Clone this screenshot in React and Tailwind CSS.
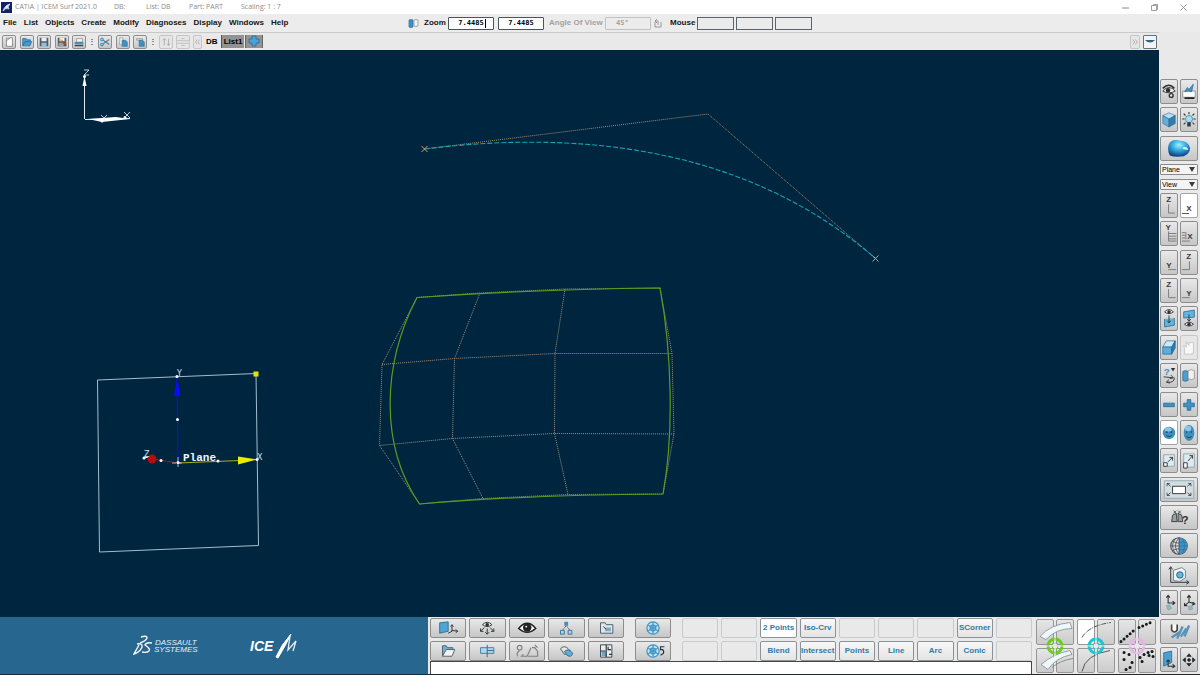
import { useState } from 'react';
import clsx from 'clsx';

const MENUS = ['File', 'List', 'Objects', 'Create', 'Modify', 'Diagnoses', 'Display', 'Windows', 'Help'];

const INK = '#2b2f33';
const BLUE = '#3f93c4';
const DEEP = '#1f5f8b';

/* ---------- toolbar icons, 14 x 14 ---------- */
const fileIcons = [
  ['New', <path d="M4 2.500h4l-4 3zM4 5v7h7V2H8" fill="#fff" stroke="#777" strokeWidth=".9" />],
  ['Open', <g><path d="M2 11V3h4l1 1.500h4V6" fill="#4aa0d0" stroke={DEEP} strokeWidth=".8" /><path d="M2 11.500l2.500-5h8l-2 5z" fill="#3f9bd0" stroke={DEEP} strokeWidth=".7" /></g>],
  ['Save', <g><path d="M2 2h10v10H2z" fill="#4f5e69" /><path d="M4 2h6v4H4z" fill="#eee" /><path d="M4 8h6v4H4z" fill="#8fc1dd" /></g>],
  ['Save as', <g><path d="M2 2h10v10H2z" fill="#4f5e69" /><path d="M4 2h6v4H4z" fill="#eee" /><path d="M3 8h6v4H3z" fill="#9a9fa3" /><path d="M6 5l6 6" stroke="#b3471f" strokeWidth="1.600" /><path d="M5 4l2 2" stroke="#e3b23c" strokeWidth="1.600" /></g>],
  ['Print', <g><path d="M4 3h7v4H4z" fill="#f5f5f5" stroke="#777" strokeWidth=".7" /><path d="M2 7h10v3H2z" fill="#4a8db5" /><path d="M2 10.500h10v1.500H2z" fill="#444" /></g>],
];
const editIcons = [
  ['Cut', <g fill="none" stroke={BLUE} strokeWidth="1.300"><path d="M5 5l7 5M5 9l7-5" stroke="#587c93" /><circle cx="3.500" cy="4" r="1.500" /><circle cx="3.500" cy="10" r="1.500" /></g>],
  ['Copy', <g><path d="M3 2h4v8H3z" fill="#e9e9e9" stroke="#999" strokeWidth=".7" /><path d="M6 5h4l2 2v5H6z" fill={BLUE} stroke={DEEP} strokeWidth=".6" /></g>],
  ['Paste', <g><path d="M3 3h7v2H3z" fill="#ddd" stroke="#888" strokeWidth=".7" /><path d="M6 5h4l2 2v5H6z" fill={BLUE} stroke={DEEP} strokeWidth=".6" /></g>],
];

/* ---------- side palette icons: narrow keys are 18 x 25, wide keys 38 x 25 ---------- */
const axis = (children) => (
  <g fill="none" stroke="#777" strokeWidth="1">
    {children}
  </g>
);
const letter = (x, y, t) => (
  <text x={x} y={y} className="font-['Liberation_Sans'] text-[9px] font-bold" fill="#3a3a3a">{t}</text>
);
const tinyEye = (x, y) => (
  <g transform={`translate(${x} ${y})`}>
    <path d="M-5 0Q0-5 5 0Q0 4-5 0z" fill="#f3f3f3" stroke={INK} strokeWidth="1" />
    <circle r="1.900" fill={INK} />
  </g>
);
const cube = <g stroke="#246189" strokeWidth=".6"><path d="M2 8l7-3 7 3-7 4z" fill="#b5dff4" /><path d="M2 8l7 4v9l-7-4z" fill="#62aed7" /><path d="M16 8l-7 4v9l7-4z" fill="#2f7fae" /></g>;

const palette = [
  { keys: [
    ['Visibility settings', <g><path d="M2 12Q9 4 16 12Q9 16 2 12z" fill="#f3f3f3" stroke={INK} /><path d="M2 9Q9 2 15 9" fill="none" stroke={INK} strokeWidth="1.800" /><circle cx="8" cy="11" r="2.500" fill={INK} /><circle cx="11.500" cy="17" r="2.200" fill="#ddd" stroke={INK} strokeWidth="1.500" /></g>],
    ['Screen', <g><path d="M2 12h14v7H2z" fill="#fff" stroke="#777" strokeWidth=".8" /><path d="M4 19h11v2H4z" fill="#222" /><path d="M4 13l3-5 2 2 5-6-2 9-4-1z" fill={BLUE} stroke={DEEP} strokeWidth=".6" /></g>],
  ] },
  { keys: [
    ['Shaded box', cube],
    ['Light', <g><circle cx="9" cy="12" r="4" fill="#a8dcf2" stroke="#3b83a8" strokeWidth=".9" /><path d="M7 15.500h4v5H7z" fill="#343c41" /><path d="M1.500 12h2.500M14 12h2.500M3 6l2 2M15 6l-2 2M9 4v2.500M3 18l2-2M15 18l-2-2" stroke="#333" strokeWidth="1.200" /></g>],
  ] },
  { wide: true, keys: [
    ['Surface shading', <g><defs><radialGradient id="blob" cx=".5" cy=".3" r=".7"><stop offset="0" stopColor="#a5f0ff" /><stop offset=".45" stopColor="#35aede" /><stop offset="1" stopColor="#0b3f80" /></radialGradient></defs><path d="M9 6Q13 2 20 4Q29 4 31 12Q31 18 24 21Q14 22 9 20Q5 12 9 6z" fill="url(#blob)" /><path d="M24 11q4-1 5 3l-6-1z" fill="#d6f7ff" /></g>],
  ] },
  { select: 'Plane', options: ['Plane', 'Axis'] },
  { select: 'View', options: ['View', 'World'] },
  { on: 1, keys: [
    ['View ZX left', <g>{letter(6, 9, 'Z')}{axis(<path d="M8.500 11v10h7" />)}</g>],
    ['View X', <g>{letter(6, 19, 'X')}{axis(<path d="M1 21.500h8" stroke="#444" />)}</g>],
  ] },
  { keys: [
    ['View Y grid', <g>{letter(5, 9, 'Y')}{axis(<path d="M8.500 10v11h9M8.500 12.500h9M8.500 15.500h9M8.500 18.500h9" />)}</g>],
    ['View X grid', <g>{letter(7, 19, 'X')}{axis(<path d="M1 11.500h4M1 14.500h4M1 17.500h4M5.500 11v8M1 21h9" />)}</g>],
  ] },
  { keys: [
    ['View Y', <g>{letter(6, 19, 'Y')}{axis(<path d="M8 20.500h9" />)}</g>],
    ['View Z', <g>{letter(6, 9, 'Z')}{axis(<path d="M9.500 11v9.500H1" />)}</g>],
  ] },
  { keys: [
    ['View Z front', <g>{letter(6, 9, 'Z')}{axis(<path d="M8.500 11v9.500h8" />)}</g>],
    ['View Y back', <g>{letter(6, 19, 'Y')}{axis(<path d="M1 20.500h9" />)}</g>],
  ] },
  { keys: [
    ['Show to plane', <g>{tinyEye(9, 5)}<path d="M4 13v9l11-2v-8" fill="#62b4dc" stroke={DEEP} strokeWidth=".8" /><path d="M9 9v8M7 15l2 2.500 2-2.500" fill="none" stroke={INK} /></g>],
    ['Plane to view', <g><path d="M3 5l12-2v8l-12 1z" fill="#62b4dc" stroke={DEEP} strokeWidth=".8" />{tinyEye(9, 19)}<path d="M9 8v7M7 13l2 2.500 2-2.500" fill="none" stroke={INK} /></g>],
  ] },
  { off: 1, keys: [
    ['Eraser', <g stroke={DEEP} strokeWidth=".7"><path d="M2 12l4-7h10l-4 7z" fill="#c8e9f8" /><path d="M2 12h10v8H2z" fill="#5aaeda" /><path d="M12 12l4-7v8l-4 7z" fill="#2c7cae" /></g>],
    ['Hand', <path d="M4 20v-6l-1-4 3 2V6l3 4V7h5v12l-3 1z" fill="#f8f8f8" stroke="#bbb" strokeWidth=".8" />],
  ] },
  { keys: [
    ['Query', <g><text x="3" y="12" className="font-['Liberation_Sans'] text-[11px] font-bold" fill={BLUE}>?</text><path d="M11 4h5l-2.500 4z" fill="#333" /><path d="M3 14l10 1M11 12l3 3-4 1M15 15q0 6-8 5M9 17l-3 3 4 1" fill="none" stroke={INK} /></g>],
    ['Compare bodies', <g><path d="M2 8q3-2 6 0v10q-3 2-6 0z" fill="#4c9fcf" stroke={DEEP} strokeWidth=".7" /><path d="M8 7q4-2 7 0v9q-3 2-7 0z" fill="#f2f2f2" stroke="#888" strokeWidth=".8" /></g>],
  ] },
  { keys: [
    ['Remove', <path d="M3 11h12v4H3z" fill={BLUE} stroke={DEEP} strokeWidth=".8" />],
    ['Add', <path d="M7 7h4v4h4v4h-4v4H7v-4H3v-4h4z" fill={BLUE} stroke={DEEP} strokeWidth=".8" />],
  ] },
  { on: 0, keys: [
    ['Sphere', <g><circle cx="9" cy="13" r="7" fill="#3f8fbe" /><ellipse cx="8" cy="9" rx="4" ry="2.500" fill="#8cc6e4" /><circle cx="6.500" cy="12" r="1" fill="#173f5c" /><circle cx="11.500" cy="12" r="1" fill="#173f5c" /><path d="M6 16q3 2 6 0" stroke="#173f5c" fill="none" /></g>],
    ['Ellipsoid', <g><ellipse cx="9" cy="13" rx="6" ry="9" fill="#3f8fbe" /><ellipse cx="8" cy="8" rx="3.500" ry="3" fill="#8cc6e4" /><circle cx="6.500" cy="12" r=".9" fill="#173f5c" /><circle cx="11.500" cy="12" r=".9" fill="#173f5c" /><path d="M6 17q3 3 6 0" stroke="#173f5c" fill="none" /></g>],
  ] },
  { keys: [
    ['Zoom out', <g><path d="M3 6h12v13H3z" fill="#ddeaf0" stroke="#8fa3ad" /><path d="M3 15h4v4H3z" fill="#fff" stroke={INK} /><path d="M8 14l5-5M9.500 9H13v3.500" fill="none" stroke={INK} /></g>],
    ['Zoom in', <g><path d="M3 5h12v15H3z" fill="#ddeaf0" stroke="#8fa3ad" /><path d="M3 15h4v6H3z" fill="#fff" stroke={INK} /><path d="M8 13l5-6M9.500 7H13v3.500" fill="none" stroke={INK} /></g>],
  ] },
  { wide: true, keys: [
    ['Fit view', <g><path d="M3 3h32v19H3z" fill="#d3dde1" stroke="#8fa9b4" /><path d="M12 9h14v8H12z" fill="#fff" stroke={INK} /><path d="M6 6l4 3M32 6l-4 3M6 19l4-3M32 19l-4-3M6 9V6h3M32 9V6h-3M6 16v3h3M32 16v3h-3" fill="none" stroke={INK} strokeWidth=".8" /></g>],
  ] },
  { wide: true, keys: [
    ['Search', <g><path d="M12 10l4-2 1 9h-6zM18 8l4 2 1 7h-5z" fill="#9aa0a4" stroke={INK} strokeWidth=".9" /><path d="M13 5l3 3M16 5l-3 3M18 5l3 3M21 5l-3 3" stroke={INK} strokeWidth=".8" /><text x="22" y="20" className="font-['Liberation_Sans'] text-[12px] font-bold" fill={INK}>?</text></g>],
  ] },
  { wide: true, keys: [
    ['Diagnosis', <g><circle cx="19" cy="13" r="9" fill="#ddd" stroke="#454f57" strokeWidth="1.200" /><path d="M19 4a9 9 0 0 1 0 18z" fill="#3f93c4" /><path d="M19 4v18M10 13h9M12 8q4 2 7 2M12 18q4-2 7-2M19 4q-8 9 0 18M15 5q-6 8 0 16" fill="none" stroke="#3b464e" strokeWidth=".8" /><path d="M19 9h8M19 13h9M19 17h8M23 5q4 8 0 16" fill="none" stroke="#2a6f9b" strokeWidth=".7" /></g>],
  ] },
  { wide: true, keys: [
    ['Model scope', <g><path d="M10 21V5M8 7l2-3 2 3M10 21h19M27 19l3 2-3 2" fill="none" stroke={INK} /><path d="M13 8l9-3 4 3v8l-6 4-7-1z" fill="#eef3f5" stroke="#6d7d86" /><circle cx="20" cy="13" r="3.500" fill="#6ab6dc" stroke={DEEP} /></g>],
  ] },
  { keys: [
    ['Local axes', <g><path d="M8 5v8h7M6 7l2-2.500 2 2.500M13 11l2.500 2-2.500 2" fill="none" stroke={INK} strokeWidth="1.200" /><path d="M6 16l4-1 2 4-4 2z" fill="#8fb9cc" stroke="#7795a3" strokeWidth=".6" /></g>],
    ['World axes', <g><path d="M9 5v7l-5 4M9 12l6 2M7 7l2-2.500 2 2.500M13 12l2.500 2-3 1.500M4 13v3h3" fill="none" stroke={INK} strokeWidth="1.200" /><path d="M8 17l4-1 1 4-4 1z" fill="#8fb9cc" stroke="#7795a3" strokeWidth=".6" /></g>],
  ] },
  { wide: true, keys: [
    ['Tools', <g><path d="M11 5v6q3 4 6 0V5" fill="#fff" stroke="#444" strokeWidth="1.800" /><path d="M11 19l9-6M17 20l6-13M21 18l6-9M25 18l5-12" stroke="#5794b6" strokeWidth="2.500" /></g>],
  ] },
  { keys: [
    ['Place plane', <g><path d="M3 5l9-2v13l-9 4z" fill="#4c9fcf" stroke={DEEP} strokeWidth=".8" /><path d="M8 13v7h7M6 15l2-2 2 2M13 18l2.500 2-2.500 2" fill="none" stroke={INK} strokeWidth="1.200" /></g>],
    ['Move', <path d="M9 6l2.500 3h-5zM9 20l2.500-3h-5zM2 13l3-2.500v5zM16 13l-3-2.500v5zM9 11l2 2-2 2-2-2z" fill="#26292c" stroke="#26292c" strokeWidth=".8" />],
  ] },
];

/* ---------- lower command keys, 36 x 19 ---------- */
const snow = (cx) => (
  <g fill="none" stroke={BLUE} strokeWidth="1.300">
    <circle cx={cx} cy="9.500" r="6.500" fill="#c9e3f0" />
    <path d={`M${cx} 3.500v12M${cx - 5} 6.500l10 6M${cx + 5} 6.500l-10 6`} />
    <circle cx={cx} cy="9.500" r="3" />
  </g>
);
const commandIcons = [
  ['Plane and axes', <g><path d="M9 4l9-1v10l-9 2z" fill="#4fa6d6" stroke={DEEP} strokeWidth=".8" /><path d="M22 7v6l-4 2M22 12l6 1M20.500 8L22 6l1.500 2M26 11l2 2-2 1.500" fill="none" stroke={INK} /></g>],
  ['View directions', <g>{tinyEye(18, 6)}<path d="M18 10v6M15 9l-4 4M21 9l4 4M16 14l2 2 2-2M11 10v3h3M25 10v3h-3" fill="none" stroke={INK} /></g>],
  ['Show', <g><path d="M9 10Q18-1 27 10Q18 18 9 10z" fill="#fff" stroke="#222" strokeWidth="1.600" /><circle cx="18" cy="9" r="4.500" fill="#1f2326" /><circle cx="17" cy="8" r="1" fill="#fff" /></g>],
  ['Hierarchy', <g><path d="M18 7l-4 5M18 7l4 5" stroke="#444" strokeDasharray="1.500 1" /><path d="M16 3h4v4h-4z" fill={BLUE} /><path d="M12 12h4v4h-4zM20 12h4v4h-4z" fill="#a8d4ea" stroke={DEEP} strokeWidth=".8" /></g>],
  ['Folder link', <g><path d="M12 15V4h5l1 2h7v9z" fill="#dfe5e8" stroke="#4f5c64" /><path d="M17 9h6v4h-6z" fill="#7badc6" /><path d="M15 8l3 3" stroke={INK} /></g>],
  ['Open folder', <g><path d="M12 15V4h4l1 2h6v2" fill="#70afd0" stroke="#50616b" /><path d="M12 15l4-7h9l-3 7z" fill="#f3f3f3" stroke="#50616b" /></g>],
  ['Section', <g><path d="M11 6h14v6H11z" fill="#b6d5e5" stroke="#3f7fa5" /><path d="M18 3v13M18 9h7" stroke="#2d6d96" /></g>],
  ['Shape tools', <g fill="none" stroke="#808080" strokeWidth="1.200"><circle cx="10" cy="6" r="2.500" /><path d="M10 9q-4 3-2 6M14 13l-2 2h6l4-9M19 15h10v-5l-3-4h-3M26 3l3 3" /></g>],
  ['Bodies', <g stroke={DEEP} strokeWidth=".9"><path d="M12 7q4-4 8 0l2 2q-2 5-6 4z" fill="#e5e9eb" stroke="#444" /><path d="M16 10q4-4 9 2-2 5-6 2z" fill="#62afd6" /></g>],
  ['Windows layout', <g><path d="M12 3h12v13H12z" fill="#e9eef0" stroke="#3c464c" /><path d="M13 10h5v5h-5z" fill="#69a9c9" /><path d="M18 3v13M12 9.500h5M20 5v3h3M21 13h3" stroke={INK} fill="none" strokeWidth="1.200" /></g>],
];
const snowIcons = [
  ['Freeze', snow(18)],
  ['Freeze five', <g>{snow(18)}<path d="M30 5h-4v3h2q2 1 1 4l-3 2" fill="none" stroke={INK} strokeWidth="1.200" /></g>],
];
const CURVES = ['', '', '2 Points', 'Iso-Crv', '', '', '', 'SCorner', '', '', '', 'Blend', 'Intersect', 'Points', 'Line', 'Arc', 'Conic', ''];

/* Groups of four keys joined by one ring, drawn on a 38 x 53 field */
const clusters = [
  { name: 'Surfaces', ring: '#6ccb1f', art: <g><path d="M4 17Q14 5 34 3l2 6Q20 9 10 20z" fill="#f0f7fb" stroke="#7d8b93" strokeWidth=".8" /><path d="M5 45Q18 34 34 31l2 4Q20 38 12 50z" fill="#f0f7fb" stroke="#7d8b93" strokeWidth=".8" /><path d="M16 48Q24 41 37 39" fill="none" stroke="#777" strokeWidth=".8" /></g> },
  { name: 'Curves', ring: '#18c6d0', on: true, art: <g fill="none" stroke="#555"><path d="M5 18Q12 6 34 3" strokeDasharray="5 1 1 1" /><path d="M5 52Q8 35 33 31" /></g> },
  { name: 'Points', ring: '#e3b4e4', art: <g fill="none" stroke="#17191b" strokeWidth="3" strokeLinecap="round"><path d="M3 22L17 10M21 8L35 2" strokeDasharray="0 4" /><path d="M6 33h.1M11 35h.1M6 40h.1M14 43h.1M8 50h.1M12 48h.1M22 38h.1M26 35h.1M30 33h.1M34 32h.1M35 37h.1M24 42h.1M31 36h.1" /></g> },
];

function Key({ label, box, children, className, on, off }) {
  return (
    <button
      type="button"
      aria-label={label}
      className={clsx(
        'block min-w-0 overflow-hidden rounded-[2px] border',
        on ? 'border-[#a4a4a4] bg-white' : off ? 'border-[#c6c6c6] bg-[#e6e6e6]' : 'border-[#8d8d8d] bg-linear-to-b from-[#e9e9e9] to-[#c6c6c6]',
        className
      )}
    >
      <svg viewBox={box} className="h-full w-full">{children}</svg>
    </button>
  );
}

function TopBar() {
  return (
    <header className="flex h-[14px] shrink-0 items-center bg-white pl-px pr-[12px] font-['Open_Sans',sans-serif] text-[7px] leading-[14px] whitespace-pre text-[#8c8c8c]">
      <svg viewBox="0 0 11 11" className="mr-[3px] h-[11px] w-[11px]">
        <path d="M0 0h11v11H0z" fill="#10206b" />
        <path d="M2 9Q4 3 9 2 6 5 8 7 5 5 2 9" fill="#dfe8ff" stroke="#fff" strokeWidth=".6" />
      </svg>
      <h1 className="w-[99px]">CATIA | ICEM Surf 2021.0</h1>
      <span className="w-[32px]">DB:</span>
      <span className="w-[43px]">List: DB</span>
      <span className="w-[52px]">Part: PART</span>
      <span>Scaling: 1 : 7</span>
      <div className="ml-auto flex gap-[20px] text-[#888]">
        <button type="button" aria-label="Minimize">
          <svg viewBox="0 0 9 9" className="h-[9px] w-[9px]"><path d="M1 5h7" stroke="currentColor" /></svg>
        </button>
        <button type="button" aria-label="Restore">
          <svg viewBox="0 0 9 9" className="h-[9px] w-[9px]"><path d="M1.500 2.500h5v5h-5zM3.500 2.500v-1h4v5h-1" fill="none" stroke="currentColor" strokeWidth=".8" /></svg>
        </button>
        <button type="button" aria-label="Close">
          <svg viewBox="0 0 9 9" className="h-[9px] w-[9px]"><path d="M1.500 1.500l6 6M7.500 1.500l-6 6" stroke="currentColor" strokeWidth=".8" /></svg>
        </button>
      </div>
    </header>
  );
}

function MenuBar() {
  const [zoom, setZoom] = useState(['7.4485', '7.4485']);
  const setAt = (i) => (e) => setZoom(zoom.map((z, k) => (k === i ? e.target.value : z)));
  const field = "h-[13px] w-[46px] rounded-[1px] border border-[#4b545b] bg-white px-[8px] text-center font-['DejaVu_Sans_Mono',monospace] text-[7px] font-bold text-black outline-none";

  return (
    <div className="flex h-[18px] shrink-0 items-center bg-[#ececec] text-[8px] font-bold text-[#161616]">
      <nav className="flex w-[34%] gap-[7px] pl-[3px]">
        {MENUS.map((m) => <button key={m} type="button">{m}</button>)}
      </nav>
      <svg viewBox="0 0 11 10" className="mr-[5px] h-[10px] w-[11px]">
        <path d="M1 2q2-1 4 0v7q-2 1-4 0z" fill={BLUE} stroke={DEEP} strokeWidth=".6" />
        <path d="M6 2q2-1 4 0v6q-2 1-4 0z" fill="#f2f2f2" stroke="#888" strokeWidth=".7" />
      </svg>
      <label htmlFor="zoomX" className="w-[24px]">Zoom</label>
      <div className="relative mr-[4px]">
        <input id="zoomX" value={zoom[0]} onChange={setAt(0)} className={field} />
        <span className="absolute top-[2px] right-[8px] h-[9px] w-px bg-black" />
      </div>
      <input aria-label="Zoom Y" value={zoom[1]} onChange={setAt(1)} className={field} />
      <label htmlFor="angle" className="w-[61px] pl-[5px] whitespace-nowrap text-[#a2a2a2]">Angle Of View</label>
      <input id="angle" disabled defaultValue="45°" className="h-[13px] w-[46px] rounded-[1px] border border-[#c2c2c2] bg-[#ececec] pl-[10px] font-['DejaVu_Sans_Mono',monospace] text-[7px] text-[#a2a2a2]" />
      <svg viewBox="0 0 9 10" className="ml-[3px] h-[10px] w-[9px]">
        <path d="M1 4v5h6V4M3 1L1 3l2 2M1 3h3v4" fill="none" stroke="#8f8f8f" strokeWidth=".9" />
      </svg>
      <span className="w-[34px] pl-[7px]">Mouse</span>
      <div className="flex gap-[2px]">
        {['left', 'middle', 'right'].map((b) => (
          <input key={b} aria-label={`Mouse ${b}`} readOnly className="h-[13px] w-[37px] border border-[#5b6369] bg-[#ebebeb]" />
        ))}
      </div>
    </div>
  );
}

function Grip() {
  return (
    <svg viewBox="0 0 4 8" className="h-[8px] w-[4px]">
      <path d="M1 1h2v1H1zM1 3h2v1H1zM1 6h2v1H1z" fill="#8b8b8b" />
    </svg>
  );
}

function ToolBar() {
  const key = 'h-[14px] w-[14px]';
  return (
    <div className="flex h-[18px] shrink-0 items-center border-t border-[#c9c9c9] bg-[#e9e9e9] pr-[2px] pl-[2px] text-[8px] font-bold text-black">
      <div className="flex w-[84px] justify-between">
        {fileIcons.map(([n, art]) => <Key key={n} label={n} box="0 0 14 14" className={key}>{art}</Key>)}
      </div>
      <div className="flex w-[12px] justify-center"><Grip /></div>
      <div className="flex w-[49px] justify-between">
        {editIcons.map(([n, art]) => <Key key={n} label={n} box="0 0 14 14" className={key}>{art}</Key>)}
      </div>
      <div className="flex w-[12px] justify-center"><Grip /></div>
      <div className="flex gap-[3px]">
        <Key off label="Sort" box="0 0 14 14" className={key}><path d="M5 11V3M3 5l2-2 2 2M10 3v8M8 9l2 2 2-2" fill="none" stroke="#aaa" /></Key>
        <Key off label="Split" box="0 0 14 14" className={key}><path d="M0 5.500h14M0 8.500h14M5 3h4M5 11h4" stroke="#bbb" /></Key>
        <Key off label="Back" box="0 0 9 14" className="h-[14px] w-[9px]"><path d="M4 4L2 7l2 3M7 4L5 7l2 3" fill="none" stroke="#aaa" /></Key>
      </div>
      <span className="w-[19px] pl-[4px]">DB</span>
      <div className="flex gap-px">
        <button type="button" className="h-[13px] w-[23px] border-l border-[#555] bg-[#929292]">List1</button>
        <button type="button" aria-label="Add list" className="flex h-[13px] w-[18px] justify-center border-r border-l border-[#666] bg-[#929292]">
          <svg viewBox="0 0 12 12" className="h-[12px] w-[12px]"><path d="M4 1h4v3h3v4H8v3H4V8H1V4h3z" fill="#4ba2d4" stroke="#276b97" strokeWidth=".8" /></svg>
        </button>
      </div>
      <div className="ml-auto flex gap-[3px]">
        <Key off label="More" box="0 0 9 14" className="h-[14px] w-[10px]"><path d="M2 4l2 3-2 3M5 4l2 3-2 3" fill="none" stroke="#aaa" /></Key>
        <button type="button" aria-label="Collapse" className="h-[14px] w-[14px] rounded-[1px] border border-[#66717a] bg-[#f3f3f3]">
          <svg viewBox="0 0 12 12" className="h-full w-full"><path d="M1 4h10Q6 9 1 4" fill="#2d6488" /></svg>
        </button>
      </div>
    </div>
  );
}

function Scene() {
  const dot = (x, y) => <circle key={`${x}-${y}`} cx={x} cy={y} r="1.500" />;
  return (
    <main className="min-h-0 flex-1 bg-[#00263f]">
      <svg viewBox="0 50 1159 567" className="h-full w-full">
        {/* view compass */}
        <g stroke="#dfe9ef" fill="#fff">
          <path d="M84.500 77v42M85 119.500l45-1" />
          <path d="M84.500 76l2 10h-4z" stroke="none" />
          <path d="M88 119l14 3 28-3-14-2z" stroke="none" />
        </g>
        <g fill="#fff">{[[84.5, 76.500], [102, 121], [125, 117.500]].map(([x, y]) => dot(x, y))}</g>
        <g fill="none" stroke="#d7e1e8" strokeWidth=".9">
          <path d="M84 70h5l-5 5h5M101 115l3 3 3-3M104 118v3M124 112l6 6M130 112l-6 6" />
        </g>

        {/* curve with its control polygon */}
        <path d="M424.500 149L708 114L875.500 258.500" fill="none" stroke="#a98a68" strokeDasharray="1 1" />
        <path d="M424.500 149Q708 114 875.500 258.500" fill="none" stroke="#16a3b5" strokeWidth="1.100" strokeDasharray="5 2" />
        <path d="M421.500 146l6 6M427.500 146l-6 6M872.500 255.500l6 6M878.500 255.500l-6 6" stroke="#d79d55" />

        {/* surface control mesh */}
        <g fill="none" stroke="#a18d78" strokeDasharray="1 1">
          <path d="M417 297.500L480 293L565 289L660 288" />
          <path d="M382 364.500L454.500 358.500L555 353.500L672 353.500" />
          <path d="M379.500 445.500L452.500 438.500L554.500 433.500L674 434" />
          <path d="M419.500 504L483 498.500L568 494.500L663 494" />
          <path d="M417 297.500L382 364.500L379.500 445.500L419.500 504" />
          <path d="M480 293L454.500 358.500L452.500 438.500L483 498.500" />
          <path d="M565 289L555 353.500L554.500 433.500L568 494.500" />
          <path d="M660 288L672 353.500L674 434L663 494" />
        </g>
        <path
          d="M417 297.500C480 293 565 289 660 288C672 353.500 674 434 663 494C568 494.500 483 498.500 419.500 504C379.500 445.500 382 364.500 417 297.500z"
          fill="none" stroke="#5c9c1c" strokeWidth="1.200"
        />

        {/* reference plane */}
        <path d="M97.500 380L256 373.500L258.500 545.500L99.500 552z" fill="none" stroke="#a3bdca" />
        <path d="M253.500 371.500h5v5h-5z" fill="#e4e400" />
        <path d="M178 463L177 378" stroke="#1212c8" strokeWidth="1.200" />
        <path d="M177 378l4 18h-7z" fill="#0b0bf0" />
        <path d="M178 463L240 460.500" stroke="#a9ae12" strokeWidth="1.200" />
        <path d="M238 456.500L257 459.500L238 464.500z" fill="#ecec00" />
        <path d="M178 463L152 459" stroke="#a02020" strokeDasharray="5 1" />
        <path d="M144 458l5-1" stroke="#fff" />
        <circle cx="152" cy="459" r="4.500" fill="#b40d0d" />
        <path d="M178 457v11M172 463h12" stroke="#cfd9df" strokeWidth=".8" strokeDasharray="4 2" />
        <g fill="#fff">
          {[[177, 376.500], [177.500, 419.500], [178, 462.500], [161, 460.500], [144, 458], [218, 461], [257, 459.500]].map(([x, y]) => dot(x, y))}
        </g>
        <g fill="#d7e1e8" className="font-['DejaVu_Sans'] text-[8px]">
          <text x="177" y="376">Y</text>
          <text x="144" y="457">Z</text>
          <text x="257" y="460">X</text>
        </g>
        <text x="183" y="461" fill="#f1f5f7" className="font-['Liberation_Mono'] text-[11px] font-bold">Plane</text>
      </svg>
    </main>
  );
}

function Brand() {
  return (
    <div className="flex w-[428px] shrink-0 items-center bg-[#27668f] pl-[133px]">
      <svg viewBox="0 0 70 24" className="h-[24px] w-[70px]">
        <g fill="none" stroke="#f2f7fa" strokeWidth="1.400">
          <path d="M8 3Q14 1 14 4Q13 7 7 9" />
          <path d="M4 10Q10 9 9 13Q7 18 1 20L6 11" />
          <path d="M19 9Q13 8 12 11Q18 15 16 17Q14 19 9 18" />
        </g>
        <g fill="#e6eff4" className="font-['Liberation_Sans'] text-[8px] italic">
          <text x="22" y="11">DASSAULT</text>
          <text x="21" y="18">SYSTEMES</text>
        </g>
      </svg>
      <svg viewBox="0 0 54 26" className="ml-[46px] h-[26px] w-[54px]">
        <text x="1" y="18" fill="#fff" className="font-['Liberation_Sans'] text-[14px] font-bold italic">ICE</text>
        <path d="M27 24Q32 12 42 1Q37 12 29 25z" fill="#fff" stroke="#fff" />
        <path d="M41 3L39 17L47 8L44 18" fill="none" stroke="#e6eff4" strokeWidth="1.300" />
      </svg>
    </div>
  );
}

function CommandPanel() {
  const key = 'h-[20px] w-full';
  return (
    <div className="flex flex-1 flex-col pt-px pl-[2px]">
      <div className="flex flex-1 items-start gap-[11px]">
        <div className="grid w-[194px] grid-cols-5 gap-[3px]">
          {commandIcons.map(([n, art]) => <Key key={n} label={n} box="0 0 36 19" className={key}>{art}</Key>)}
        </div>
        <div className="grid w-[36px] gap-[3px]">
          {snowIcons.map(([n, art]) => <Key key={n} label={n} box="0 0 36 19" className={key}>{art}</Key>)}
        </div>
        <div className="grid flex-1 grid-cols-9 gap-[3px]">
          {CURVES.map((c, i) => (
            <button
              key={i}
              type="button"
              disabled={!c}
              className={clsx(
                'flex h-[20px] min-w-0 items-center justify-center overflow-hidden rounded-[2px] border text-[8px] font-bold whitespace-nowrap text-[#2f7ba6]',
                !c && 'border-[#cacaca] bg-[#e9e9e9]',
                c && (c === '2 Points' ? 'border-[#8b9298] bg-white' : 'border-[#8b9298] bg-linear-to-b from-[#f8f8f8] to-[#e4e4e4]')
              )}
            >
              {c}
            </button>
          ))}
        </div>
      </div>
      <input aria-label="Command line" className="h-[13px] w-full border border-b-0 border-[#454545] bg-white px-[2px] text-[8px] outline-none" />
    </div>
  );
}

function Clusters() {
  return (
    <div className="flex gap-[3px] pt-[2px] pr-[3px] pl-[4px]">
      {clusters.map((c) => (
        <div key={c.name} className="relative grid h-[54px] w-[38px] grid-cols-2 gap-x-[2px] gap-y-[3px]">
          {[0, 1, 2, 3].map((i) => (
            <button
              key={i}
              type="button"
              aria-label={`${c.name} ${i + 1}`}
              className={clsx('rounded-[2px] border border-[#969696]', c.on && i === 0 ? 'bg-white' : 'bg-linear-to-b from-[#e6e6e6] to-[#cbcbcb]')}
            />
          ))}
          <svg viewBox="0 0 38 53" className="pointer-events-none absolute inset-0 h-full w-full">
            {c.art}
            <circle cx="19" cy="26.500" r="7" fill="none" stroke={c.ring} strokeWidth="3" />
            <circle cx="19" cy="26.500" r="3" fill="none" stroke={c.ring} strokeWidth="1" />
            <path d="M18.500 17h1v20h-1zM10 26h18v1H10z" fill="#e9e9e9" />
          </svg>
        </div>
      ))}
    </div>
  );
}

function SidePalette() {
  return (
    <aside className="flex w-[41px] shrink-0 flex-col justify-between bg-[#e9e9e9] pt-[47px] pr-[2px] pb-[2px] pl-px">
      {palette.map((row, r) => row.select ? (
        <div key={r} className="relative">
          <select aria-label={row.select} defaultValue={row.select} className="block h-[11px] w-full appearance-none rounded-[1px] border border-[#8a8a8a] bg-[#f4f4f4] pl-px text-[7px] leading-[9px] text-black">
            {row.options.map((o) => <option key={o}>{o}</option>)}
          </select>
          <svg viewBox="0 0 6 5" className="pointer-events-none absolute top-[3px] right-[3px] h-[5px] w-[6px]"><path d="M0 0h6L3 5z" fill="#3b3b3b" /></svg>
        </div>
      ) : (
        <div key={r} className={clsx('grid gap-[2px]', row.wide ? 'grid-cols-1' : 'grid-cols-2')}>
          {row.keys.map(([n, art], i) => (
            <Key key={n} label={n} box={row.wide ? '0 0 38 25' : '0 0 18 25'} on={row.on === i} off={row.off === i} className="h-[25px] w-full">
              {art}
            </Key>
          ))}
        </div>
      ))}
    </aside>
  );
}

export default function App() {
  return (
    <div className="flex h-screen flex-col overflow-hidden border-b border-[#1d2a33] bg-[#e9e9e9] font-['Liberation_Sans',Arial,sans-serif]">
      <TopBar />
      <MenuBar />
      <div className="flex min-h-0 flex-1">
        <div className="flex min-w-0 flex-1 flex-col">
          <ToolBar />
          <Scene />
          <footer className="flex h-[57px] shrink-0">
            <Brand />
            <CommandPanel />
            <Clusters />
          </footer>
        </div>
        <SidePalette />
      </div>
    </div>
  );
}
